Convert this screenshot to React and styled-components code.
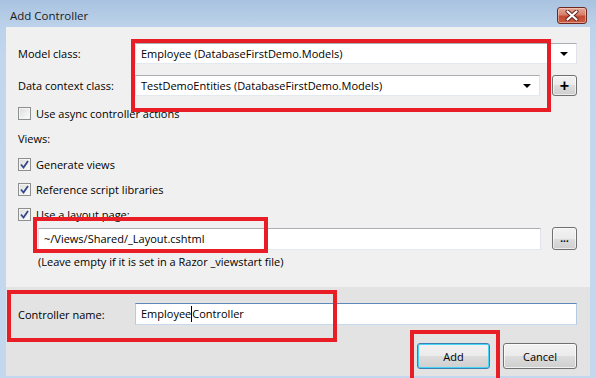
import styled, { createGlobalStyle } from 'styled-components'

const GlobalStyle = createGlobalStyle`
  html, body {
    margin: 0;
    padding: 0;
    background: #c4d8ee;
  }
  body {
    font-family: "Open Sans", "Liberation Sans", Arial, sans-serif;
    font-size: 11px;
    color: #000;
  }
  * { box-sizing: border-box; }
`

// Window chrome
const Window = styled.div`
  position: relative;
  width: 596px;
  height: 378px;
  display: flex;
  flex-direction: column;
  overflow: hidden;
  background: linear-gradient(#a8c2df 0px, #bcd2ea 26px, #c2d7ee 60px, #c3d8ee 100%);
`

const TitleBar = styled.div`
  height: 27px;
  display: flex;
  align-items: center;
  justify-content: space-between;
  padding: 3px 9px 0 10px;
`

const Title = styled.span`
  font-size: 11.5px;
  color: #1b1b1b;
`

const CloseButton = styled.div`
  width: 30px;
  height: 17px;
  border: 1px solid #6a2a22;
  border-radius: 3px;
  background: linear-gradient(#e6a796 0%, #d7806c 45%, #c44a33 55%, #cc5a3f 100%);
  display: flex;
  align-items: center;
  justify-content: center;
  box-shadow: inset 0 0 0 1px rgba(255, 220, 210, 0.5);
`

const Client = styled.div`
  flex: 1;
  margin: 0 6px 2px 6px;
  display: flex;
  flex-direction: column;
`

const TopPane = styled.div`
  height: 260px;
  background: #f0f0f0;
  padding: 16px 13px 0 12px;
  display: flex;
  flex-direction: column;
`

const BottomPane = styled.div`
  flex: 1;
  background: #e3e3e3;
  padding: 16px 13px 0 12px;
  display: flex;
  flex-direction: column;
`

// Form parts
const FieldRow = styled.div`
  display: flex;
  align-items: center;
  margin-top: ${p => p.$mt || 0}px;
  margin-left: ${p => p.$ml || 0}px;
`

const Label = styled.span`
  width: 117px;
  flex-shrink: 0;
  white-space: nowrap;
`

const TextBox = styled.div`
  flex: 1;
  height: ${p => p.$h || 21}px;
  background: #fff;
  border: 1px solid;
  border-color: ${p => p.$focus
    ? '#5c87b8 #b5cbe3 #c7d9ec #b5cbe3'
    : '#abadb3 #e2e3ea #e3e9ef #e2e3ea'};
  display: flex;
  align-items: center;
  justify-content: space-between;
  padding: 0 8px 0 5px;
  white-space: nowrap;
`

const Arrow = styled.span`
  width: 0;
  height: 0;
  border-left: 4px solid transparent;
  border-right: 4px solid transparent;
  border-top: 4px solid #000;
`

const Caret = styled.span`
  display: inline-block;
  width: 0;
  height: 16px;
  border-left: 1px solid #000;
  vertical-align: middle;
  margin-top: -2px;
`

const SmallButton = styled.div`
  width: 25px;
  height: ${p => p.$h || 21}px;
  flex-shrink: 0;
  margin-left: ${p => p.$gap || 12}px;
  border: 1px solid #707070;
  border-radius: 3px;
  background: linear-gradient(#f2f2f2 0%, #ebebeb 50%, #dddddd 50%, #cfcfcf 100%);
  display: flex;
  align-items: center;
  justify-content: center;
  font-family: "Liberation Sans", Arial, sans-serif;
  font-weight: bold;
  font-size: ${p => p.$fs || 16}px;
  line-height: 1;
  box-shadow: inset 0 0 0 1px rgba(255, 255, 255, 0.6);
`

const CheckRow = styled.div`
  height: 25px;
  display: flex;
  align-items: center;
  gap: 5px;
  margin-top: ${p => p.$mt || 0}px;
`

const Box = styled.span`
  width: 13px;
  height: 13px;
  flex-shrink: 0;
  border: 1px solid #8e8f8f;
  background: linear-gradient(135deg, #dcdcdc, #fdfdfd);
  box-shadow: inset 0 0 0 1px #f4f4f4;
  display: flex;
  align-items: center;
  justify-content: center;
`

const PlainRow = styled.div`
  height: 25px;
  display: flex;
  align-items: center;
`

const HelpText = styled.div`
  margin: 4px 0 0 20px;
  line-height: 16px;
  white-space: nowrap;
`

const ButtonRow = styled.div`
  display: flex;
  justify-content: flex-end;
  gap: 13px;
  margin-top: 18px;
`

const DialogButton = styled.div`
  width: ${p => p.$w}px;
  height: 26px;
  border: 1px solid ${p => p.$default ? '#3c7fb1' : '#707070'};
  border-radius: 3px;
  background: linear-gradient(#f2f2f2 0%, #ebebeb 50%, #dddddd 50%, #cfcfcf 100%);
  box-shadow: inset 0 0 0 1px ${p => p.$default ? '#48d3f6' : 'rgba(255,255,255,0.7)'};
  display: flex;
  align-items: center;
  justify-content: center;
`

// Red annotation frames drawn over the screenshot
const Mark = styled.div`
  position: absolute;
  left: ${p => p.$x}px;
  top: ${p => p.$y}px;
  width: ${p => p.$w}px;
  height: ${p => p.$h}px;
  border: 4px solid #e81d25;
  pointer-events: none;
`

function Check({ checked }) {
  return (
    <Box>
      {checked && (
        <svg width="9" height="9" viewBox="0 0 9 9">
          <path d="M1 4.5 L3.5 7.5 L8 1" fill="none" stroke="#34478c" strokeWidth="1.8" />
        </svg>
      )}
    </Box>
  )
}

export default function App() {
  return (
    <>
      <GlobalStyle />
      <Window>
        <TitleBar>
          <Title>Add Controller</Title>
          <CloseButton>
            <svg width="14" height="11" viewBox="0 0 14 11">
              <path d="M2.5 1.5 L11.5 9.5 M11.5 1.5 L2.5 9.5" stroke="#5b2219" strokeWidth="4" strokeLinecap="round" />
              <path d="M2.5 1.5 L11.5 9.5 M11.5 1.5 L2.5 9.5" stroke="#ffffff" strokeWidth="2.2" strokeLinecap="round" />
            </svg>
          </CloseButton>
        </TitleBar>
        <Client>
          <TopPane>
            <FieldRow>
              <Label>Model class:</Label>
              <TextBox>
                <span>Employee (DatabaseFirstDemo.Models)</span>
                <Arrow />
              </TextBox>
            </FieldRow>
            <FieldRow $mt={11}>
              <Label>Data context class:</Label>
              <TextBox>
                <span>TestDemoEntities (DatabaseFirstDemo.Models)</span>
                <Arrow />
              </TextBox>
              <SmallButton>+</SmallButton>
            </FieldRow>
            <CheckRow $mt={5}>
              <Check />
              <span>Use async controller actions</span>
            </CheckRow>
            <PlainRow>Views:</PlainRow>
            <CheckRow $mt={1}>
              <Check checked />
              <span>Generate views</span>
            </CheckRow>
            <CheckRow>
              <Check checked />
              <span>Reference script libraries</span>
            </CheckRow>
            <CheckRow>
              <Check checked />
              <span>Use a layout page:</span>
            </CheckRow>
            <FieldRow $ml={20}>
              <TextBox $h={22}>
                <span>~/Views/Shared/_Layout.cshtml</span>
              </TextBox>
              <SmallButton $h={23} $fs={10} $gap={11}>...</SmallButton>
            </FieldRow>
            <HelpText>(Leave empty if it is set in a Razor _viewstart file)</HelpText>
          </TopPane>
          <BottomPane>
            <FieldRow>
              <Label>Controller name:</Label>
              <TextBox $h={22} $focus>
                <span>Employee<Caret />Controller</span>
              </TextBox>
            </FieldRow>
            <ButtonRow>
              <DialogButton $w={73} $default>Add</DialogButton>
              <DialogButton $w={74}>Cancel</DialogButton>
            </ButtonRow>
          </BottomPane>
        </Client>
        <Mark $x={131} $y={39} $w={420} $h={73} />
        <Mark $x={33} $y={217} $w={235} $h={36} />
        <Mark $x={7} $y={290} $w={330} $h={52} />
        <Mark $x={410} $y={330} $w={90} $h={52} />
      </Window>
    </>
  )
}
